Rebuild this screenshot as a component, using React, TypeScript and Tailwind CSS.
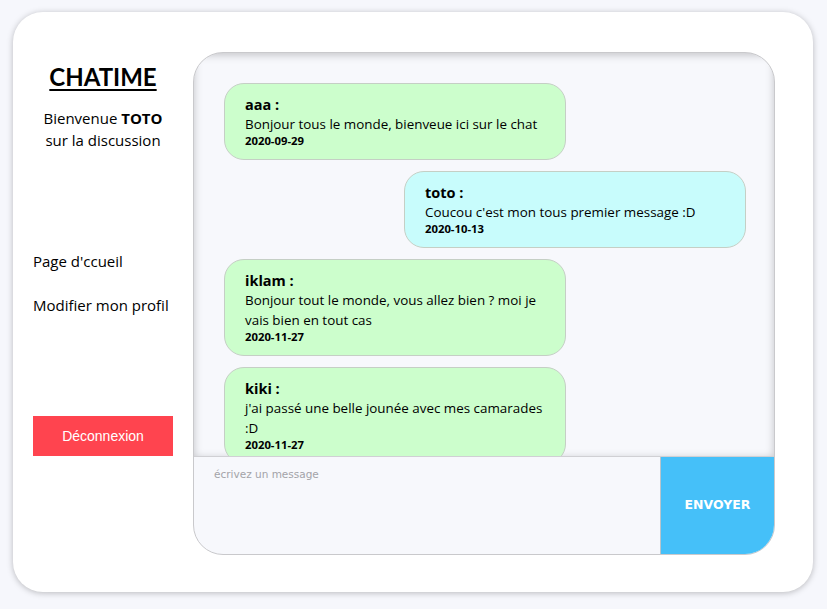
import React from "react";

type Msg = { name: string; text: string; date: string; mine?: boolean };

const msgs: Msg[] = [
  { name: "aaa", text: "Bonjour tous le monde, bienveue ici sur le chat", date: "2020-09-29" },
  { name: "toto", text: "Coucou c'est mon tous premier message :D", date: "2020-10-13", mine: true },
  { name: "iklam", text: "Bonjour tout le monde, vous allez bien ? moi je vais bien en tout cas", date: "2020-11-27" },
  { name: "kiki", text: "j'ai passé une belle jounée avec mes camarades :D", date: "2020-11-27" },
];

export default function App() {
  return (
    <div
      className="w-[827px] h-[609px] bg-[#f6f7fc] pt-[12px] pl-[13px] overflow-hidden"
      style={{ fontFamily: "'Open Sans', 'Noto Sans', sans-serif" }}
    >
      <div className="w-[800px] h-[580px] bg-white rounded-[30px] shadow-[0_1px_6px_rgba(0,0,0,0.25)] flex">
        {/* sidebar */}
        <div className="w-[180px] shrink-0 flex flex-col">
          <div className="pt-[50px] text-center">
            <div
              className="text-[24px] leading-[30px] font-bold underline underline-offset-[3px] decoration-[2px] text-black"
              style={{ fontFamily: "Lato, sans-serif" }}
            >
              CHATIME
            </div>
            <div className="mt-[15px] text-[15px] leading-[22px] text-black">
              Bienvenue <span className="font-bold">TOTO</span>
              <br />
              sur la discussion
            </div>
          </div>
          <div className="pl-[20px] mt-[99px] text-[15px] leading-[22px] text-black flex flex-col gap-[22px]">
            <div>Page d'ccueil</div>
            <div>Modifier mon profil</div>
          </div>
          <div className="pl-[20px] mt-[100px]">
            <div
              className="w-[140px] h-[40px] bg-[#ff444f] text-white text-[14px] flex items-center justify-center"
              style={{ fontFamily: "'Liberation Sans', Arial, sans-serif" }}
            >
              Déconnexion
            </div>
          </div>
        </div>

        {/* chat panel */}
        <div className="mt-[40px] w-[582px] h-[503px] rounded-[30px] border border-[#c9c9cc] bg-[#f7f8fc] overflow-hidden flex flex-col">
          <div className="h-[403px] shrink-0 overflow-hidden shadow-[inset_0_2px_8px_rgba(0,0,0,0.22)] pt-[30px] pl-[30px] pr-[28px] flex flex-col gap-[11px]">
            {msgs.map((m, i) => (
              <div
                key={i}
                className={`w-[342px] shrink-0 rounded-[20px] border border-[#c5cfc5] px-[20px] pt-[12px] pb-[11px] text-black ${
                  m.mine ? "self-end bg-[#c8fcfc]" : "self-start bg-[#ccfecc]"
                }`}
              >
                <div className="text-[14.5px] leading-[18px] font-bold">{m.name} :</div>
                <div className="text-[13.4px] leading-[20px]">{m.text}</div>
                <div className="text-[11.3px] leading-[14px] font-bold">{m.date}</div>
              </div>
            ))}
          </div>
          <div className="flex flex-1 border-t border-[#d0d0d4]">
            <div
              className="flex-1 pl-[20px] pt-[10px] text-[10.5px] text-[#a3a3a8]"
              style={{ fontFamily: "'DejaVu Sans', sans-serif" }}
            >
              écrivez un message
            </div>
            <div
              className="w-[114px] bg-[#45c0f9] border-l border-[#b8c4cc] flex items-center justify-center text-white text-[12.5px] font-bold"
              style={{ fontFamily: "'DejaVu Sans', sans-serif" }}
            >
              ENVOYER
            </div>
          </div>
        </div>
      </div>
    </div>
  );
}
